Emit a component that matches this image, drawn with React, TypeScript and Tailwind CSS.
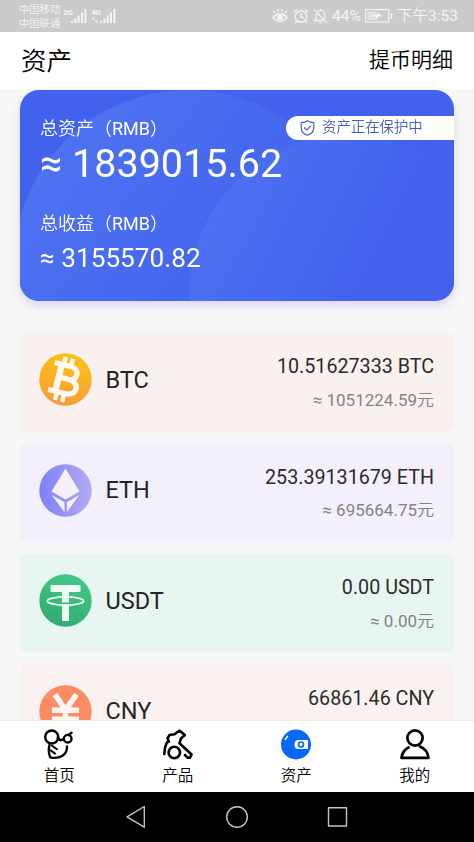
import type { ReactNode } from "react";

function Signal() {
  return (
    <svg width="17" height="16" viewBox="0 0 17 16" fill="#f4f4f4">
      <rect x="0" y="13" width="2" height="2" />
      <rect x="3.3" y="10.5" width="2" height="4.5" />
      <rect x="6.6" y="7.5" width="2" height="7.5" />
      <rect x="10" y="4.5" width="2" height="10.5" />
      <rect x="13.4" y="1" width="2" height="14" />
    </svg>
  );
}

function StatusBar() {
  return (
    <div className="flex h-8 items-start justify-between bg-[#cbcbcb] text-[#f4f4f4]">
      <div className="flex pl-[19px]">
        <div className="pt-[3px] text-[10.3px] leading-[14px] font-[350]">
          <div>中国移动</div>
          <div>中国联通</div>
        </div>
        <span className="ml-[3px] w-[8px] pt-[8px] text-[8px] leading-[9px] font-bold tracking-tighter">2G</span>
        <div className="pt-2"><Signal /></div>
        <div className="ml-[3px] w-[9px] pt-[8px] text-[8px] leading-[9px] font-bold tracking-tighter">
          4G
          <svg className="ml-[1px]" width="6" height="6" viewBox="0 0 6 6" fill="#f4f4f4"><path d="M0 2.5 1.5 0 3 2.5ZM3 3.5h3L4.5 6Z" /></svg>
        </div>
        <div className="pt-2"><Signal /></div>
      </div>
      <div className="flex h-8 items-center pr-4 text-[15.5px]">
        <svg width="16" height="16" viewBox="0 0 16 16" fill="none" stroke="#f4f4f4" strokeWidth="1.4">
          <path d="M.7 9.5Q8 2 15.3 9.5Q8 17 .7 9.5ZM3 4.8 1.4 3M6.3 3.5 5.7 1.2M9.7 3.5l.6-2.3M13 4.8 14.6 3" />
          <circle cx="8" cy="9.3" r="2.2" fill="#f4f4f4" />
        </svg>
        <svg className="ml-[5px]" width="16" height="16" viewBox="0 0 16 16" fill="none" stroke="#f4f4f4" strokeWidth="1.4">
          <circle cx="8" cy="8.5" r="5.8" />
          <path d="M8 5v4l2.5 1M1 4.3 4 1.6M15 4.3 12 1.6M3.5 13.5 2.3 15M12.5 13.5l1.2 1.5" />
        </svg>
        <svg className="ml-[4px]" width="15" height="16" viewBox="0 0 15 16" fill="none" stroke="#f4f4f4" strokeWidth="1.3">
          <path d="M4.5 3.5Q11.5 0 11.8 6.5L12 11M10.5 12.5H1.5L3.2 10V6M1 1.5 14 15M5.8 14.7h3M7.3 1v1" />
        </svg>
        <span className="ml-[4px] w-[28px] pt-[2px]">44%</span>
        <svg className="ml-[5px]" width="28" height="16" viewBox="0 0 28 16" fill="none" stroke="#f4f4f4">
          <rect x=".7" y="1.5" width="23" height="12.5" strokeWidth="1.2" />
          <rect x="2.5" y="3.5" width="9" height="8.5" fill="#e2e2e2" stroke="none" />
          <path d="M26.5 5v6" strokeWidth="1.5" />
          <path d="m6 7 6 .2 1-3 2.5 3.1 3.5.8-6 .3-1 2.6-2-2.7Z" fill="#fafafa" stroke="none" />
        </svg>
        <span className="ml-[4px] pt-[2px] whitespace-nowrap">
          <span className="font-[350]">下午</span>3:53
        </span>
      </div>
    </div>
  );
}

function BalanceCard() {
  return (
    <section className="relative mx-5 h-[211px] shrink-0 overflow-hidden rounded-[19px] bg-[#4262ee] text-white">
      <svg className="absolute inset-0" width="434" height="211" viewBox="0 0 434 211">
        <defs>
          <linearGradient id="glowA" x1="0.05" y1="0.2" x2="0.65" y2="0.65">
            <stop offset="0" stopColor="#4f73f2" />
            <stop offset="1" stopColor="#4262ee" />
          </linearGradient>
          <linearGradient id="glowB" x1="0.05" y1="0.2" x2="0.55" y2="0.45">
            <stop offset="0" stopColor="#4e71f2" />
            <stop offset="1" stopColor="#4262ee" />
          </linearGradient>
        </defs>
        <circle cx="168" cy="174" r="174" fill="url(#glowA)" />
        <circle cx="330" cy="205" r="161" fill="url(#glowB)" />
      </svg>
      <div className="relative flex flex-col pl-5">
        <p className="mt-[27px] text-[18px] leading-6"><span className="font-[350]">总资产（</span>RMB<span className="font-[350]">）</span></p>
        <p className="text-[39.5px] leading-[46px]">≈ 1839015.62</p>
        <p className="mt-[25px] text-[18px] leading-6"><span className="font-[350]">总收益（</span>RMB<span className="font-[350]">）</span></p>
        <p className="mt-[6px] text-[26.2px] leading-8">≈ 3155570.82</p>
      </div>
      <div className="absolute top-[26px] right-0 flex h-[24px] w-[168px] items-center rounded-l-full bg-white pl-[14px] text-[14.4px] text-[#4d5fbc]">
        <svg width="15" height="16" viewBox="0 0 15 16" fill="none" stroke="#4d5fbc" strokeWidth="1.2" strokeLinejoin="round">
          <path d="M7.5.8Q10 2.7 13.8 2.7V8q0 5-6.3 7.3Q1.2 13 1.2 8V2.7Q5 2.7 7.5.8Z" />
          <path d="m4.2 7.5 2.6 2.7 4.2-4.6" />
        </svg>
        <span className="ml-[7px] font-[350]">资产正在保护中</span>
      </div>
    </section>
  );
}

function BtcIcon() {
  return (
    <svg width="53" height="53" viewBox="0 0 53 53">
      <defs>
        <linearGradient id="btc" x1=".6" y1="0" x2=".4" y2="1">
          <stop offset="0" stopColor="#f9c313" />
          <stop offset="1" stopColor="#fb9a3b" />
        </linearGradient>
      </defs>
      <circle cx="26.5" cy="26.5" r="26.2" fill="url(#btc)" />
      <g transform="rotate(14 26.5 26.5)" fill="none" stroke="#fff8ee">
        <path d="M12 12.6H29C39 12.6 39 25.7 29 25.7H21M29 25.7C42.5 25.7 42.5 40.4 29 40.4H12" strokeWidth="5.2" />
        <path d="M19.3 12V41" strokeWidth="6.4" />
        <path d="M21.3 4.5V12M28.7 4.5V12M21.3 41V49M28.7 41V49" strokeWidth="4.4" />
      </g>
    </svg>
  );
}

function EthIcon() {
  return (
    <svg width="53" height="53" viewBox="0 0 53 53">
      <defs>
        <linearGradient id="eth">
          <stop offset="0" stopColor="#7d80fa" />
          <stop offset="1" stopColor="#b3abf0" />
        </linearGradient>
      </defs>
      <circle cx="26.5" cy="26.5" r="26.2" fill="url(#eth)" />
      <path d="M26.5 4.5 40.5 27.5 26.5 35.5 12.5 27.5ZM12.5 30.8 25.5 38.2V48.2ZM40.5 30.8 27.8 38.2V48.2Z" fill="#f4f1fd" />
    </svg>
  );
}

function UsdtIcon() {
  return (
    <svg width="53" height="53" viewBox="0 0 53 53">
      <defs>
        <linearGradient id="usdt" x1="0.7" y1="0" x2="0.3" y2="1">
          <stop offset="0" stopColor="#46c887" />
          <stop offset="1" stopColor="#30ab71" />
        </linearGradient>
      </defs>
      <circle cx="26.5" cy="26.5" r="26.2" fill="url(#usdt)" />
      <path d="M11.5 11H41.5V18H30V28.5H23V18H11.5ZM23 30.5H30V47H23Z" fill="#ecfaf3" />
      <ellipse cx="26.5" cy="27" rx="18.2" ry="4.2" fill="none" stroke="#ecfaf3" strokeWidth="1.8" />
    </svg>
  );
}

function CnyIcon() {
  return (
    <svg width="53" height="53" viewBox="0 0 53 53">
      <circle cx="26.5" cy="26.5" r="26.2" fill="#fc8c61" />
      <path d="M16 9.5 26.5 25 37.5 9.5M26.5 24V47M13 25.2H40M13 34.4H40" fill="none" stroke="#fff5f0" strokeWidth="5.6" />
    </svg>
  );
}

type Asset = { name: string; amount: string; value?: string; bg: string; icon: ReactNode };

const assets: Asset[] = [
  { name: "BTC", amount: "10.51627333 BTC", value: "≈ 1051224.59", bg: "bg-[#f9f1ee]", icon: <BtcIcon /> },
  { name: "ETH", amount: "253.39131679 ETH", value: "≈ 695664.75", bg: "bg-[#f3effb]", icon: <EthIcon /> },
  { name: "USDT", amount: "0.00 USDT", value: "≈ 0.00", bg: "bg-[#e7f6f1]", icon: <UsdtIcon /> },
  { name: "CNY", amount: "66861.46 CNY", bg: "bg-[#faf2f1]", icon: <CnyIcon /> },
];

function AssetRow({ name, amount, value, bg, icon }: Asset) {
  return (
    <li className={`flex h-[97.5px] shrink-0 justify-between rounded-[5px] pr-5 pl-[19px] ${bg}`}>
      <div className="flex h-[93px] items-center text-[23.5px] text-[#242424]">
        {icon}
        <span className="ml-[13.5px] pt-[1.5px]">{name}</span>
      </div>
      <div className="pt-[21px] text-right">
        <p className="text-[19.7px] leading-[26px] text-[#2b2b2b]">{amount}</p>
        {value && (
          <p className="mt-[7.5px] text-[17px] leading-[24px] text-[#858282]">
            {value}
            <span className="font-[350]">元</span>
          </p>
        )}
      </div>
    </li>
  );
}

function HomeIcon() {
  return (
    <svg width="30" height="31" viewBox="0 0 30 31" fill="none" stroke="#000" strokeWidth="2.4" strokeLinecap="round" strokeLinejoin="round">
      <circle cx="7.7" cy="8" r="6.5" />
      <circle cx="23.7" cy="9.7" r="3.8" />
      <path d="M13.8 8.5 16 11.3 19.8 10M24.5 6 27.5 3.8M5.5 16C4.2 21 4.8 25 6.2 28.3C15 30.5 23.5 26 23 17.5" />
      <path d="M8 16.8 13 20.3M6.5 21.3 11 24.6" strokeWidth="2" />
    </svg>
  );
}

function ProductIcon() {
  return (
    <svg width="30" height="31" viewBox="0 0 30 31" fill="none" stroke="#000" strokeWidth="2.6" strokeLinecap="round" strokeLinejoin="round">
      <circle cx="11.3" cy="23.5" r="5.7" />
      <path d="M1.3 25Q1.5 18 4 13.2L6 12.7 4.5 9.3 6.5 6 11.5 5.3 16.5 1.5 21.8 6 18 9.5 16.5 14.2 28.6 25.5 27 28.7H24.5L22 26" />
    </svg>
  );
}

function WalletIcon() {
  return (
    <svg width="30" height="31" viewBox="0 0 30 31">
      <circle cx="15" cy="15.5" r="15" fill="#0869f7" />
      <path d="M4.2 10.5 6.5 7.3" stroke="#fff" strokeWidth="1.4" strokeLinecap="round" />
      <path d="M17 11H27V20H17Q13.5 20 13.5 15.5T17 11Z" fill="#fff" />
      <circle cx="20" cy="15.5" r="2.5" fill="#fff" stroke="#0869f7" strokeWidth="1.7" />
    </svg>
  );
}

function UserIcon() {
  return (
    <svg width="30" height="31" viewBox="0 0 30 31" fill="none" stroke="#000" strokeWidth="2.7" strokeLinecap="round" strokeLinejoin="round">
      <circle cx="15" cy="9" r="7.6" />
      <path d="M8.5 18.5Q2.5 21.5 1.5 28.8H28.5Q27.5 20.5 20 17.5" />
    </svg>
  );
}

const tabs: { label: string; icon: ReactNode }[] = [
  { label: "首页", icon: <HomeIcon /> },
  { label: "产品", icon: <ProductIcon /> },
  { label: "资产", icon: <WalletIcon /> },
  { label: "我的", icon: <UserIcon /> },
];

export default function App() {
  return (
    <div className="flex h-[842px] w-[474px] flex-col overflow-hidden bg-[#f7f7f7] font-['Roboto','Noto_Sans_CJK_SC',sans-serif]">
      <StatusBar />
      <header className="flex h-[57px] shrink-0 items-center justify-between bg-white px-[21px] pt-[1px] font-[350] text-black">
        <h1 className="text-[25.5px]">资产</h1>
        <span className="text-[21px]">提币明细</span>
      </header>
      <main className="flex min-h-0 flex-1 flex-col overflow-hidden">
        <div className="rounded-[19px] pt-[0.5px] drop-shadow-[0_5px_5px_rgba(95,85,225,0.18)]">
          <BalanceCard />
        </div>
        <ul className="mx-5 mt-[32.5px] flex flex-col gap-[13px]">
          {assets.map((asset) => (
            <AssetRow key={asset.name} {...asset} />
          ))}
        </ul>
      </main>
      <nav className="grid h-[72px] shrink-0 grid-cols-4 border-t border-[#ececec] bg-white text-black">
        {tabs.map((tab) => (
          <div key={tab.label} className="flex flex-col items-center pt-[8px]">
            {tab.icon}
            <span className="mt-[5px] text-[15.5px] leading-[23px] font-[350]">{tab.label}</span>
          </div>
        ))}
      </nav>
      <div className="flex h-[50px] shrink-0 items-center justify-center bg-black">
        <svg width="222" height="24" viewBox="0 0 222 24" fill="none" stroke="#c4c4c4" strokeWidth="1.4" strokeLinejoin="round">
          <path d="M18.3 1.5V22.2L1 11.8Z" />
          <circle cx="111" cy="12" r="10.3" />
          <rect x="202.5" y="2.7" width="18" height="18.3" />
        </svg>
      </div>
    </div>
  );
}
